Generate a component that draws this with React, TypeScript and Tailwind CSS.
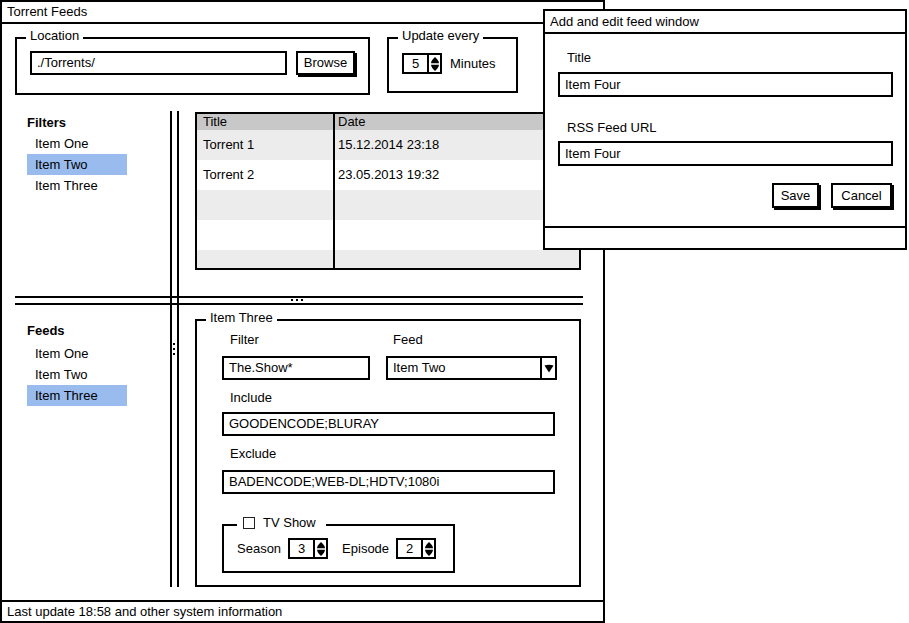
import React from 'react'

function Spinner({ value }: { value: string }) {
  return (
    <div className="flex h-[21px] w-[40px] border-2 border-black bg-white">
      <div className="flex w-[25px] items-center justify-center border-r-2 border-black leading-none">{value}</div>
      <div className="flex flex-1 items-center justify-center">
        <svg width="10" height="16" viewBox="0 0 10 16" fill="#000">
          <path d="M5 1C7 3 9 5 9 7.2H1C1 5 3 3 5 1Z" />
          <path d="M1 8.8H9C9 11 7 13 5 15C3 13 1 11 1 8.8Z" />
        </svg>
      </div>
    </div>
  )
}

function Field({ value, className = '' }: { value: string; className?: string }) {
  return (
    <div className={`flex h-[24px] items-center border-2 border-black bg-white pl-[5px] ${className}`}>
      {value}
    </div>
  )
}

function Button({ label, className = '' }: { label: string; className?: string }) {
  return (
    <div
      className={`flex h-[24px] items-center justify-center border-2 border-black bg-white shadow-[2px_2px_0_#000] ${className}`}
    >
      {label}
    </div>
  )
}

function ItemList({ title, selected }: { title: string; selected: number }) {
  const items = ['Item One', 'Item Two', 'Item Three']
  return (
    <div>
      <div className="font-bold leading-[21px]">{title}</div>
      {items.map((item, i) => (
        <div
          key={item}
          className={`w-[100px] pl-[8px] leading-[21px] ${i === selected ? 'bg-[#99bbee]' : ''}`}
        >
          {item}
        </div>
      ))}
    </div>
  )
}

const rows = [
  ['Torrent 1', '15.12.2014 23:18'],
  ['Torrent 2', '23.05.2013 19:32'],
  ['', ''],
  ['', ''],
  ['', ''],
]

export default function App() {
  return (
    <div className="relative h-[623px] w-[909px] overflow-hidden bg-white font-['Liberation_Sans',Arial,sans-serif] text-[13px] text-black">
      {/* Main window */}
      <div className="flex h-[623px] w-[605px] flex-col border-2 border-black">
        <div className="flex h-[22px] shrink-0 items-center border-b-2 border-black pl-[5px]">Torrent Feeds</div>

        <div className="flex-1">
          {/* Top row */}
          <div className="flex items-start pl-[13px] pt-[5px]">
            <fieldset className="h-[66px] w-[355px] border-2 border-black pl-[9px]">
              <legend className="px-1 pb-1 leading-[14px]">Location</legend>
              <div className="mt-[4px] flex pl-[4px]">
                <Field value="./Torrents/" className="w-[257px]" />
                <Button label="Browse" className="ml-[9px] w-[59px]" />
              </div>
            </fieldset>
            <fieldset className="ml-[17px] h-[64px] w-[131px] border-2 border-black pl-[9px]">
              <legend className="px-1 pb-1 leading-[14px]">Update every</legend>
              <div className="mt-[6px] flex items-center pl-[4px]">
                <Spinner value="5" />
                <span className="ml-[8px]">Minutes</span>
              </div>
            </fieldset>
          </div>

          {/* Split panes */}
          <div className="ml-[13px] mt-[16px] grid grid-cols-[155px_9px_404px] grid-rows-[185px_9px_282px]">
            <div className="pl-[12px] pt-[1px]">
              <ItemList title="Filters" selected={1} />
            </div>
            <div className="border-x-2 border-black" />
            <div>
              <div className="ml-[16px] mt-[1px] h-[158px] w-[386px] overflow-hidden border-2 border-black">
                <div className="grid grid-cols-[138px_1fr]">
                  <div className="h-[16px] border-r-2 border-black bg-[#c8c8c8] pl-[6px] leading-[16px]">Title</div>
                  <div className="h-[16px] bg-[#c8c8c8] pl-[3px] leading-[16px]">Date</div>
                  {rows.map((r, i) => (
                    <React.Fragment key={i}>
                      <div
                        className={`flex h-[30px] items-center border-r-2 border-black pl-[6px] ${i % 2 === 0 ? 'bg-[#ececec]' : 'bg-white'}`}
                      >
                        {r[0]}
                      </div>
                      <div className={`flex h-[30px] items-center pl-[3px] ${i % 2 === 0 ? 'bg-[#ececec]' : 'bg-white'}`}>
                        {r[1]}
                      </div>
                    </React.Fragment>
                  ))}
                </div>
              </div>
            </div>

            <div className="border-y-2 border-black" />
            <div className="border-2 border-black" />
            <div className="border-y-2 border-black pl-[112px] pt-[1px]">
              <div className="flex gap-[3px]">
                <div className="h-[2px] w-[2px] bg-black" />
                <div className="h-[2px] w-[2px] bg-black" />
                <div className="h-[2px] w-[2px] bg-black" />
              </div>
            </div>

            <div className="pl-[12px] pt-[15px]">
              <div className="font-bold leading-[21px]">Feeds</div>
              <div className="mt-[2px]">
                {['Item One', 'Item Two', 'Item Three'].map((item, i) => (
                  <div key={item} className={`w-[100px] pl-[8px] leading-[21px] ${i === 2 ? 'bg-[#99bbee]' : ''}`}>
                    {item}
                  </div>
                ))}
              </div>
            </div>
            <div className="border-x-2 border-black pl-[1px] pt-[38px]">
              <div className="flex flex-col gap-[3px]">
                <div className="h-[2px] w-[2px] bg-black" />
                <div className="h-[2px] w-[2px] bg-black" />
                <div className="h-[2px] w-[2px] bg-black" />
              </div>
            </div>
            <div>
              <fieldset className="ml-[16px] mt-[6px] h-[276px] w-[386px] border-2 border-black pl-[9px]">
                <legend className="px-1 pb-1 leading-[14px]">Item Three</legend>
                <div className="pl-[16px]">
                  <div className="mt-[1px] flex leading-[20px]">
                    <div className="w-[148px] pl-[8px]">Filter</div>
                    <div className="ml-[16px] pl-[7px]">Feed</div>
                  </div>
                  <div className="mt-[6px] flex">
                    <Field value="The.Show*" className="w-[148px]" />
                    <div className="ml-[16px] flex h-[24px] w-[171px] border-2 border-black bg-white">
                      <div className="flex flex-1 items-center pl-[5px]">Item Two</div>
                      <div className="flex w-[15px] items-center justify-center border-l-2 border-black">
                        <svg width="10" height="9" viewBox="0 0 10 9" fill="#000">
                          <path d="M0.5 1.5Q5 0 9.5 1.5L5 8.5Z" />
                        </svg>
                      </div>
                    </div>
                  </div>
                  <div className="mt-[8px] pl-[8px] leading-[20px]">Include</div>
                  <Field value="GOODENCODE;BLURAY" className="mt-[4px] w-[333px]" />
                  <div className="mt-[8px] pl-[8px] leading-[20px]">Exclude</div>
                  <Field value="BADENCODE;WEB-DL;HDTV;1080i" className="mt-[6px] w-[333px]" />
                  <fieldset className="mt-[22px] h-[57px] w-[233px] border-2 border-black pl-[13px]">
                    <legend className="flex items-center pb-1 pl-[6px] pr-[10px] leading-[14px]">
                      <span className="inline-block h-[12px] w-[12px] border border-[#222] bg-white" />
                      <span className="ml-[8px]">TV Show</span>
                    </legend>
                    <div className="mt-[4px] flex items-center">
                      <span>Season</span>
                      <div className="ml-[7px]">
                        <Spinner value="3" />
                      </div>
                      <span className="ml-[14px]">Episode</span>
                      <div className="ml-[7px]">
                        <Spinner value="2" />
                      </div>
                    </div>
                  </fieldset>
                </div>
              </fieldset>
            </div>
          </div>
        </div>

        <div className="flex h-[21px] shrink-0 items-center border-t-2 border-black pl-[5px]">
          Last update 18:58 and other system information
        </div>
      </div>

      {/* Floating dialog */}
      <div className="absolute left-[543px] top-[9px] flex h-[241px] w-[364px] flex-col border-2 border-black bg-white">
        <div className="flex h-[23px] shrink-0 items-center border-b-2 border-black pl-[5px]">Add and edit feed window</div>
        <div className="flex-1 pl-[13px] pr-[12px] pt-[14px]">
          <div className="pl-[9px] leading-[20px]">Title</div>
          <Field value="Item Four" className="mt-[4px] h-[25px]" />
          <div className="mt-[21px] pl-[9px] leading-[20px]">RSS Feed URL</div>
          <Field value="Item Four" className="mt-[3px] h-[25px]" />
          <div className="mt-[17px] flex justify-end pr-[1px]">
            <Button label="Save" className="h-[25px] w-[47px]" />
            <Button label="Cancel" className="ml-[12px] h-[25px] w-[61px]" />
          </div>
        </div>
        <div className="h-[22px] shrink-0 border-t-2 border-black" />
      </div>
    </div>
  )
}
